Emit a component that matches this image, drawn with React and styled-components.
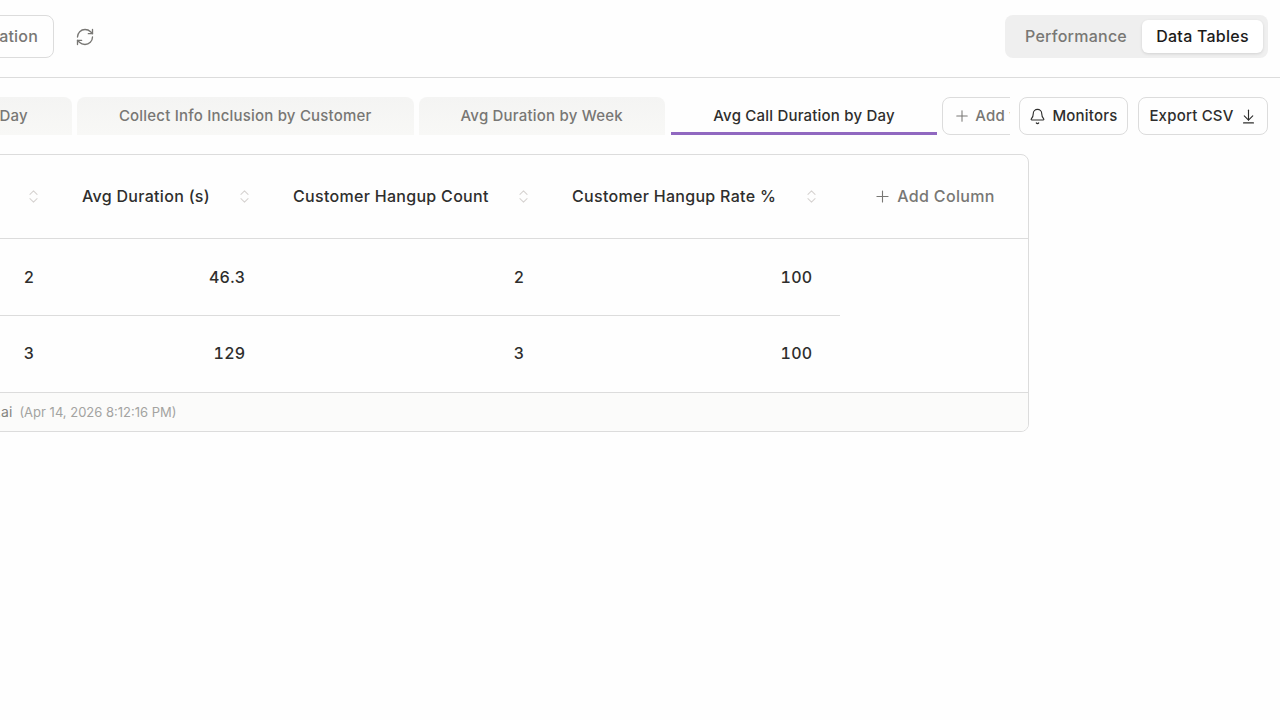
import styled, { createGlobalStyle } from 'styled-components'
import { RefreshCw, Bell, ArrowDownToLine, Plus, ChevronsUpDown } from 'lucide-react'

const GlobalStyle = createGlobalStyle`
html, body {
    margin: 0;
    padding: 0;
    background: #fefefe;
    overflow: hidden;
}
* {
    box-sizing: border-box;
}
`

const columns = ['Call Count', 'Avg Duration (s)', 'Customer Hangup Count', 'Customer Hangup Rate %']
const rows = [
    ['2', '46.3', '2', '100'],
    ['3', '129', '3', '100'],
]

const App = () => {
    return (
        <Page>
            <GlobalStyle />
            <Header>
                <HeaderLeft>
                    <FilterBtn>Select Duration</FilterBtn>
                    <RefreshCw size={20} color="#787774" strokeWidth={1.6} />
                </HeaderLeft>
                <Segment>
                    <SegmentItem>Performance</SegmentItem>
                    <SegmentItem $active>Data Tables</SegmentItem>
                </Segment>
            </Header>
            <TabBar>
                <TabStrip>
                    <Tab>Calls by Day</Tab>
                    <Tab>Collect Info Inclusion by Customer</Tab>
                    <Tab>Avg Duration by Week</Tab>
                    <ActiveTab>Avg Call Duration by Day</ActiveTab>
                    <AddView>
                        <Plus size={18} strokeWidth={1.4} />
                        Add view
                    </AddView>
                </TabStrip>
                <ActionBtn>
                    <Bell size={17} strokeWidth={1.6} />
                    Monitors
                </ActionBtn>
                <ActionBtn $wide>
                    Export CSV
                    <ArrowDownToLine size={17} strokeWidth={1.6} />
                </ActionBtn>
            </TabBar>
            <Table>
                <HeadRow>
                    {columns.map((name) => (
                        <HeadCell key={name}>
                            <span>{name}</span>
                            <ChevronsUpDown size={17} color="#d6d3d1" strokeWidth={1.5} />
                        </HeadCell>
                    ))}
                    <AddColumn>
                        <Plus size={19} strokeWidth={1.4} />
                        Add Column
                    </AddColumn>
                </HeadRow>
                {rows.map((row, i) => (
                    <Row key={i}>
                        {row.map((value, j) => (
                            <Cell key={j} $divider={i === 0}>{value}</Cell>
                        ))}
                    </Row>
                ))}
                <Footer>
                    <FooterUser>support@acme.ai</FooterUser>
                    <span>(Apr 14, 2026 8:12:16 PM)</span>
                </Footer>
            </Table>
        </Page>
    )
}

export default App

const Page = styled.div`
width: 1280px;
height: 720px;
overflow: hidden;
background: #fefefe;
font-family: "Inter", "Liberation Sans", sans-serif;
color: #2e2e2d;
`

const Header = styled.div`
height: 78px;
border-bottom: 1px solid #dcdcdc;
display: flex;
justify-content: space-between;
align-items: flex-start;
padding: 15px 12px 0 0;
`

const HeaderLeft = styled.div`
display: flex;
align-items: center;
gap: 21px;
height: 43px;
`

const FilterBtn = styled.div`
height: 43px;
width: 160px;
margin-left: -106px;
padding: 0 15px 2px 0;
border: 1px solid #dcdcdc;
border-radius: 8px;
display: flex;
justify-content: flex-end;
align-items: center;
font-size: 16px;
font-weight: 500;
letter-spacing: .2px;
color: #787774;
white-space: nowrap;
`

const Segment = styled.div`
width: 263px;
height: 43px;
padding: 5px;
background: #efefef;
border-radius: 8px;
display: flex;
justify-content: flex-end;
`

const SegmentItem = styled.div`
width: ${(p) => (p.$active ? '121px' : '132px')};
padding-bottom: 2px;
display: flex;
justify-content: center;
align-items: center;
font-size: 16px;
font-weight: 500;
letter-spacing: .25px;
border-radius: 6px;
color: ${(p) => (p.$active ? '#1c1b1a' : '#787774')};
background: ${(p) => (p.$active ? '#ffffff' : 'transparent')};
box-shadow: ${(p) => (p.$active ? '0 1px 3px rgba(0, 0, 0, .12)' : 'none')};
`

const TabBar = styled.div`
display: flex;
align-items: center;
height: 38px;
margin-top: 19px;
`

const TabStrip = styled.div`
width: 1010px;
margin-right: 9px;
overflow: hidden;
display: flex;
gap: 5px;
`

const Tab = styled.div`
flex-shrink: 0;
height: 38px;
padding: 0 42px 2px;
background: linear-gradient(#f4f4f3, #f8f8f6);
border-radius: 8px 8px 0 0;
display: flex;
align-items: center;
font-size: 15px;
font-weight: 500;
letter-spacing: .2px;
color: #787774;
white-space: nowrap;

&:first-child {
    margin-left: -106px;
    padding-left: 43px;
    padding-right: 44px;
}
`

const ActiveTab = styled(Tab)`
margin-left: 1px;
padding: 1px 42.5px 0;
background: transparent;
border-radius: 0;
border-bottom: 3px solid #9068c0;
color: #2e2e2d;
`

const AddView = styled.div`
flex-shrink: 0;
height: 38px;
padding: 0 12px 2px 10px;
border: 1px solid #dcdcdc;
border-radius: 8px;
display: flex;
align-items: center;
gap: 4px;
font-size: 15px;
font-weight: 500;
letter-spacing: .2px;
color: #787774;
white-space: nowrap;

svg {
    margin-top: 2px;
}
`

const ActionBtn = styled.div`
flex-shrink: 0;
width: ${(p) => (p.$wide ? '130px' : '109px')};
margin-left: ${(p) => (p.$wide ? '10px' : '0')};
height: 38px;
padding-bottom: 2px;
border: 1px solid #dcdcdc;
border-radius: 8px;
display: flex;
justify-content: center;
align-items: center;
gap: 6px;
font-size: 15px;
font-weight: 500;
letter-spacing: .2px;
color: #2e2e2d;
white-space: nowrap;

svg {
    margin-top: 2px;
}
`

const Table = styled.div`
width: 1049px;
margin: 19px 0 0 -20px;
border: 1px solid #dcdcdc;
border-radius: 8px;
overflow: hidden;
`

const Row = styled.div`
display: grid;
grid-template-columns: 81px 211px 279px 288px 1fr;
height: 77px;
&:nth-child(3) {
    height: 76px;
    padding-bottom: 2px;
}
`

const HeadRow = styled(Row)`
height: 84px;
border-bottom: 1px solid #dcdcdc;
`

const HeadCell = styled.div`
padding: 0 20px;
display: flex;
justify-content: space-between;
align-items: center;
font-size: 16px;
font-weight: 500;
letter-spacing: .3px;
color: #2e2e2d;
white-space: nowrap;

span {
    margin-bottom: 2px;
}
&:first-child span {
    visibility: hidden;
    width: 0;
}
&:first-child {
    justify-content: flex-end;
}
`

const AddColumn = styled.div`
display: flex;
justify-content: center;
align-items: center;
gap: 5px;
padding-bottom: 2px;
font-size: 16px;
font-weight: 500;
letter-spacing: .35px;
color: #787774;

svg {
    margin-top: 2px;
}
`

const Cell = styled.div`
padding-right: 27.5px;
display: flex;
justify-content: flex-end;
align-items: center;
font-size: 16px;
font-weight: 500;
letter-spacing: .3px;
font-variant-numeric: tabular-nums;
color: #2e2e2d;
border-bottom: ${(p) => (p.$divider ? '1px solid #dcdcdc' : 'none')};
`

const Footer = styled.div`
height: 39px;
padding-bottom: 1px;
border-top: 1px solid #dcdcdc;
background: #fbfbfa;
display: flex;
align-items: center;
gap: 7px;
font-size: 13px;
color: #a3a3a1;
white-space: nowrap;
`

const FooterUser = styled.span`
margin-left: -85px;
font-size: 14px;
font-weight: 400;
color: #85847f;
`
